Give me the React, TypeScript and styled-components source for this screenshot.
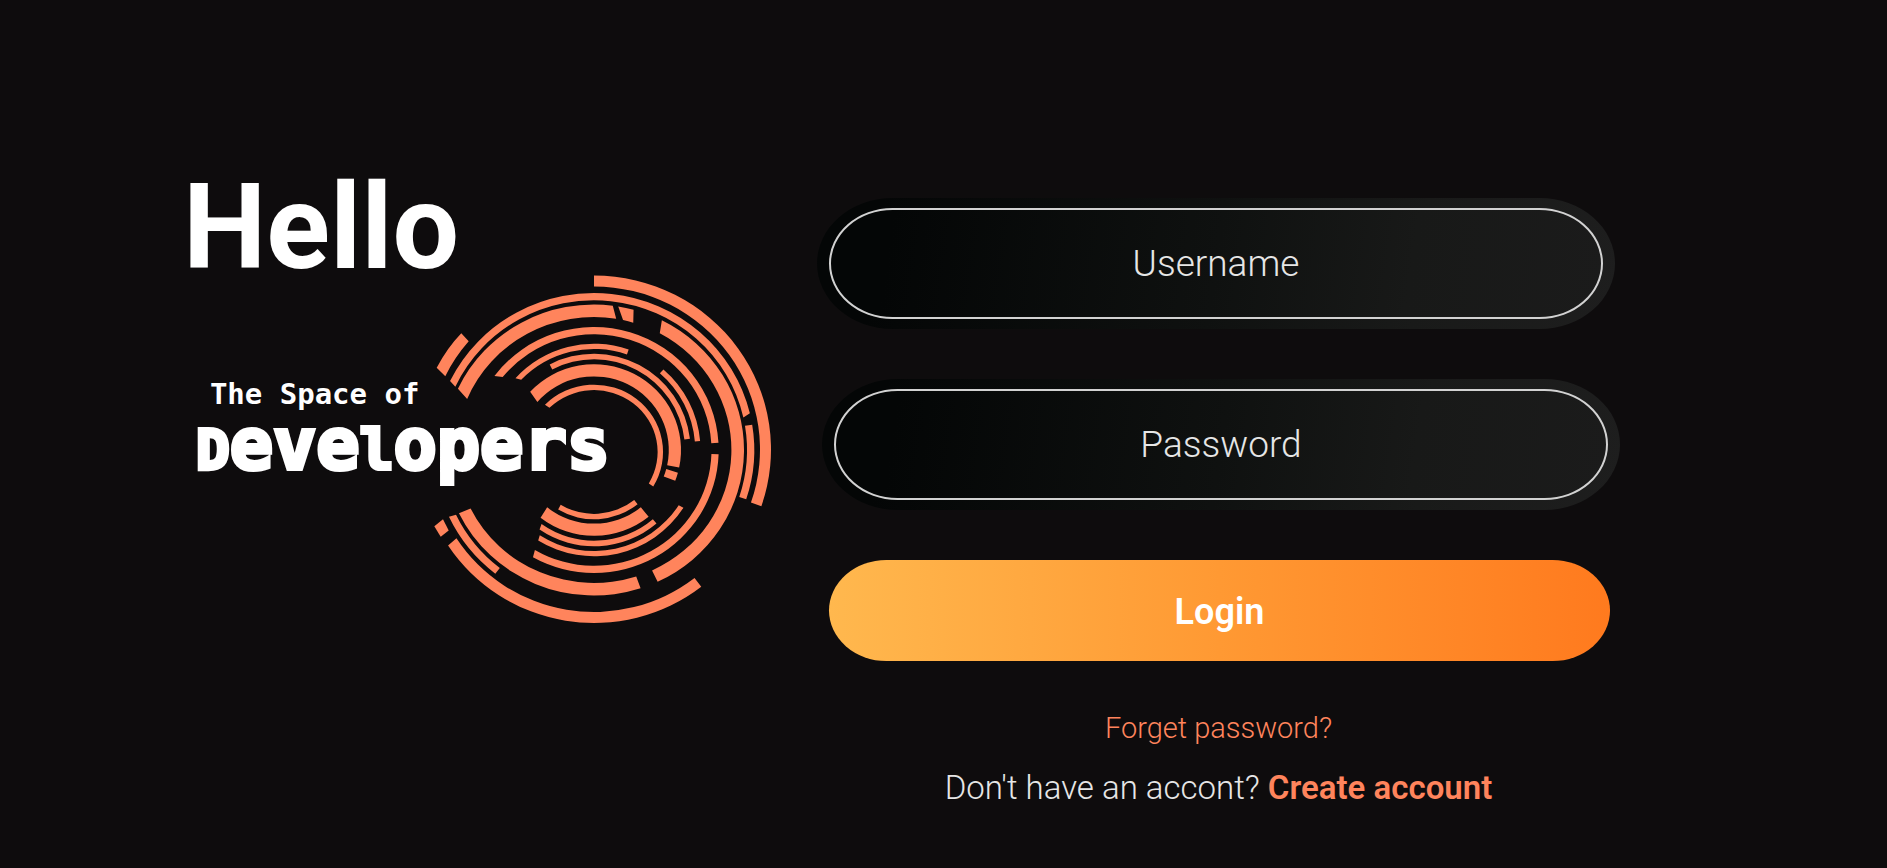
import React from "react";
import styled, { createGlobalStyle } from "styled-components";

const accent = "#ff845c";

const GlobalStyle = createGlobalStyle`
  *, *::before, *::after { box-sizing: border-box; }
  body {
    margin: 0;
    background: #0e0c0d;
    color: #ffffff;
    font-family: Roboto, "Liberation Sans", sans-serif;
  }
`;

const Page = styled.main`
  display: grid;
  grid-template-columns: 817fr 803fr 267fr;
  align-items: start;
  min-height: 100vh;
`;

const Intro = styled.section`
  display: flex;
  flex-direction: column;
  padding: 168px 0 0 23%;
`;

const Greeting = styled.h1`
  margin: 0 0 -14px -5px;
  font-size: 118px;
  font-weight: 700;
  line-height: 120px;
`;

const Logo = styled.div`
  display: grid;
  width: 584px;
`;

const Rings = styled.svg`
  grid-area: 1 / 1;
  justify-self: end;
  width: 340px;
  height: 352px;
  fill: ${accent};
`;

const Wordmark = styled.div`
  grid-area: 1 / 1;
  z-index: 1;
  padding-top: 102px;
  font-family: "DejaVu Sans Mono", monospace;
  font-weight: 700;
  white-space: nowrap;
`;

const Tagline = styled.p`
  margin: 0 0 0 22px;
  font-size: 29px;
  line-height: 36px;
`;

const Brand = styled.p`
  margin: 0 0 0 8px;
  font-size: 72px;
  line-height: 64px;
  -webkit-text-stroke: 4px #ffffff;
`;

const SmallLetter = styled.span`
  font-size: 56px;
`;

const Form = styled.form`
  display: flex;
  flex-direction: column;
  padding: 198px 0 40px;
`;

const Field = styled.label<{ $side: "start" | "end" }>`
  display: flex;
  align-self: flex-${(p) => p.$side};
  width: calc(100% - 5px);
  margin-bottom: 50px;
  padding: 10px 12px;
  border-radius: 76px / 66px;
  background: linear-gradient(98deg, #040606 8%, #0f1110 50%, #191a19 75%, #1e1e1e);
`;

const Input = styled.input`
  flex: 1;
  min-width: 0;
  height: 111px;
  padding: 0 24px;
  border: 2px solid #d2d2d2;
  border-radius: 64px / 56px;
  outline: none;
  background: linear-gradient(98deg, #040606 8%, #0f1110 50%, #181918 75%, #1b1b1b);
  color: #e6e6e6;
  font-family: inherit;
  font-size: 37px;
  font-weight: 300;
  text-align: center;

  &::placeholder {
    color: #e6e6e6;
    opacity: 1;
  }
`;

const LoginButton = styled.button`
  height: 101px;
  margin: 0 10px 0 12px;
  padding: 2px 6px 0;
  border: 0;
  border-radius: 58px / 51px;
  background: linear-gradient(90deg, #ffb84e, #ff9933 50%, #ff7a1e);
  color: #ffffff;
  font-family: inherit;
  font-size: 36px;
  font-weight: 600;
  cursor: pointer;
`;

const Links = styled.div`
  display: flex;
  flex-direction: column;
  align-items: center;
  gap: 20px;
  padding-top: 47px;
`;

const ForgetLink = styled.a`
  color: ${accent};
  font-size: 29px;
  font-weight: 300;
  line-height: 40px;
  text-decoration: none;
`;

const SignUp = styled.p`
  margin: 0;
  color: #e6e6e6;
  font-size: 33px;
  font-weight: 300;
  line-height: 40px;
`;

const CreateLink = styled.a`
  color: ${accent};
  font-weight: 600;
  text-decoration: none;
`;

/* Outer radii and thickness of a ring; angles are in degrees, clockwise from the right. */
type Ring = {
  rx: number;
  ry: number;
  width: number;
  cy?: number;
  /* start and end on the outer edge, then start and end on the inner edge */
  arcs: [number, number, number, number][];
};

const rings: Ring[] = [
  { rx: 177, ry: 174, width: 11, cy: -0.5, arcs: [[-90, 19, -90, 19]] },
  { rx: 175, ry: 173, width: 11, arcs: [[146.5, 52.2, 147, 52.2]] },
  {
    rx: 160.3,
    ry: 157,
    width: 7.3,
    arcs: [
      [-153.9, -13.5, -155, -12.5],
      [-9.3, 18.3, -9.3, 18.3],
      [154.8, 128, 154.4, 128],
    ],
  },
  {
    rx: 150,
    ry: 145.5,
    width: 12.6,
    arcs: [
      [-155.1, -82.8, -157.4, -80.7],
      [-80.7, -74.7, -77.8, -73.4],
      [-63.1, 64.9, -61.4, 65],
      [154.2, 71.9, 153.9, 72.1],
    ],
  },
  {
    rx: 124.7,
    ry: 123,
    width: 7.2,
    arcs: [
      [-143, -3.4, -141, -3.4],
      [2, 119.3, 2, 120.2],
    ],
  },
  {
    rx: 106.5,
    ry: 106.3,
    width: 5.3,
    arcs: [
      [-137.5, -71, -136, -71],
      [-49.3, -4.8, -49.4, -4.8],
      [121.6, 32.9, 122.4, 33.2],
    ],
  },
  {
    rx: 96.6,
    ry: 96.3,
    width: 5.6,
    arcs: [
      [-117.3, -6.7, -117.3, -6.7],
      [124.3, 49.7, 125.2, 49.7],
    ],
  },
  {
    rx: 87,
    ry: 85.8,
    width: 12.2,
    arcs: [
      [-137.2, 11.8, -139.2, 12],
      [15.3, 21, 15, 21.2],
      [127.9, 51.1, 128.8, 51.2],
    ],
  },
  {
    rx: 69,
    ry: 67.3,
    width: 5.4,
    cy: 2,
    arcs: [
      [-135.3, 30.8, -134.5, 30.5],
      [121.3, 50.8, 121.6, 50.8],
    ],
  },
];

function arcPath(ring: Ring, arc: [number, number, number, number]) {
  const { rx, ry, width, cy = 0 } = ring;
  const [outerFrom, outerTo, innerFrom, innerTo] = arc;
  const point = (deg: number, ax: number, ay: number) => {
    const a = (deg * Math.PI) / 180;
    return `${(ax * Math.cos(a)).toFixed(2)} ${(cy + ay * Math.sin(a)).toFixed(2)}`;
  };
  const ix = rx - width;
  const iy = ry - width;
  const large = Math.abs(outerTo - outerFrom) > 180 ? 1 : 0;
  const sweep = outerTo > outerFrom ? 1 : 0;
  return [
    `M${point(outerFrom, rx, ry)}`,
    `A${rx} ${ry} 0 ${large} ${sweep} ${point(outerTo, rx, ry)}`,
    `L${point(innerTo, ix, iy)}`,
    `A${ix} ${iy} 0 ${large} ${1 - sweep} ${point(innerFrom, ix, iy)}Z`,
  ].join("");
}

function RingLogo() {
  return (
    <Rings viewBox="-162 -176 340 352" aria-hidden="true">
      {rings.flatMap((ring) =>
        ring.arcs.map((arc) => (
          <path key={`${ring.rx}-${arc[0]}`} d={arcPath(ring, arc)} />
        ))
      )}
      <path d="M-132.7 -116.8L-125.3 -108.8Q-140 -92 -148.7 -73.8L-157.3 -82.2Q-147 -102 -132.7 -116.8Z" />
      <path d="M-159.7 76.2L-151 69.2L-145.3 80.5L-153.3 86.8Z" />
    </Rings>
  );
}

export default function App() {
  return (
    <>
      <GlobalStyle />
      <Page>
        <Intro>
          <Greeting>Hello</Greeting>
          <Logo>
            <RingLogo />
            <Wordmark>
              <Tagline>The Space of</Tagline>
              <Brand>
                <SmallLetter>D</SmallLetter>eve<SmallLetter>l</SmallLetter>opers
              </Brand>
            </Wordmark>
          </Logo>
        </Intro>
        <Form onSubmit={(e) => e.preventDefault()}>
          <Field $side="start">
            <Input type="text" name="username" placeholder="Username" aria-label="Username" />
          </Field>
          <Field $side="end">
            <Input type="password" name="password" placeholder="Password" aria-label="Password" />
          </Field>
          <LoginButton type="submit">Login</LoginButton>
          <Links>
            <ForgetLink href="#forget">Forget password?</ForgetLink>
            <SignUp>
              Don't have an accont? <CreateLink href="#create">Create account</CreateLink>
            </SignUp>
          </Links>
        </Form>
      </Page>
    </>
  );
}
